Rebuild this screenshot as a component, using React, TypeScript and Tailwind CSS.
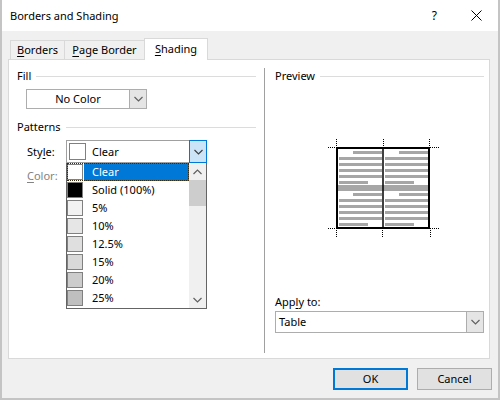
import React from "react";

const Chevron = ({ up = false, color = "#606060" }: { up?: boolean; color?: string }) => (
  <svg width="9" height="6" viewBox="0 0 9 6">
    {up ? (
      <polyline points="0.5,5 4.5,1 8.5,5" fill="none" stroke={color} strokeWidth="1.2" />
    ) : (
      <polyline points="0.5,1 4.5,5 8.5,1" fill="none" stroke={color} strokeWidth="1.2" />
    )}
  </svg>
);

const GroupHeader = ({ label }: { label: string }) => (
  <div className="flex items-center h-[16px]">
    <span>{label}</span>
    <div className="flex-1 h-px bg-[#dcdcdc] ml-[5px]" />
  </div>
);

const rows = [
  { label: "Clear", color: "#ffffff" },
  { label: "Solid (100%)", color: "#000000" },
  { label: "5%", color: "#f2f2f2" },
  { label: "10%", color: "#e6e6e6" },
  { label: "12.5%", color: "#dfdfdf" },
  { label: "15%", color: "#d9d9d9" },
  { label: "20%", color: "#cccccc" },
  { label: "25%", color: "#bfbfbf" },
];

const Preview = () => {
  const tops1 = [13, 19, 25, 31, 37, 43];
  const tops2 = [55, 61, 67, 73, 79, 85];
  const cells = [
    { L: 12, R: 55, sr: 26, sl: 41 },
    { L: 58, R: 101, sr: 72, sl: 87 },
  ];
  const g = "#a6a6a6";
  const lines: React.ReactNode[] = [];
  [tops1, tops2].forEach((tops, bi) => {
    cells.forEach((c, ci) => {
      tops.forEach((t, i) => {
        let x1 = c.L;
        let x2 = c.R;
        if (i === 0) x1 = c.sr;
        if (i === 5) x2 = c.sl;
        lines.push(<rect key={`${bi}-${ci}-${i}`} x={x1} y={t} width={x2 - x1} height={3} fill={g} />);
      });
    });
  });
  const d = { stroke: "#000", strokeWidth: 1, strokeDasharray: "1 1" };
  return (
    <svg width="113" height="101" viewBox="0 0 113 101">
      {lines}
      <rect x={11} y={47} width={91} height={6} fill={g} />
      <rect x={10} y={10} width={92} height={80} fill="none" stroke="#000" strokeWidth={2} />
      <line x1={56} y1={10} x2={56} y2={90} stroke="#000" strokeWidth={1.5} />
      <line x1={1} y1={9.5} x2={9} y2={9.5} {...d} />
      <line x1={9.5} y1={1} x2={9.5} y2={9} {...d} />
      <line x1={52} y1={9.5} x2={61} y2={9.5} {...d} />
      <line x1={56.5} y1={1} x2={56.5} y2={9} {...d} />
      <line x1={103} y1={9.5} x2={112} y2={9.5} {...d} />
      <line x1={102.5} y1={1} x2={102.5} y2={9} {...d} />
      <line x1={1} y1={90.5} x2={9} y2={90.5} {...d} />
      <line x1={9.5} y1={92} x2={9.5} y2={100} {...d} />
      <line x1={51} y1={90.5} x2={60} y2={90.5} {...d} />
      <line x1={55.5} y1={92} x2={55.5} y2={100} {...d} />
      <line x1={103} y1={90.5} x2={112} y2={90.5} {...d} />
      <line x1={103.5} y1={92} x2={103.5} y2={100} {...d} />
    </svg>
  );
};

export default function App() {
  return (
    <div className="w-[500px] h-[400px] flex flex-col bg-[#f0f0f0] border-x-2 border-b-2 border-[#c4c4c4] text-[11px] leading-[16px] text-black font-['Noto_Sans',sans-serif]">
      {/* Title bar */}
      <div className="h-[31px] shrink-0 bg-white flex items-center pl-[8px] pr-[16px]">
        <span className="text-[11px]">Borders and Shading</span>
        <div className="flex-1" />
        <span className="text-[12px]">?</span>
        <svg className="ml-[34px]" width="11" height="11" viewBox="0 0 11 11">
          <line x1="0.5" y1="0.5" x2="10.5" y2="10.5" stroke="#000" strokeWidth="1" />
          <line x1="10.5" y1="0.5" x2="0.5" y2="10.5" stroke="#000" strokeWidth="1" />
        </svg>
      </div>

      {/* Tabs */}
      <div className="pt-[7px] pl-[8px] flex items-end h-[28px] shrink-0">
        <div className="w-[55px] h-[19px] border border-b-0 border-[#d9d9d9] flex items-center justify-center">
          <span><u className="underline-offset-2">B</u>orders</span>
        </div>
        <div className="w-[81px] -ml-px h-[19px] border border-b-0 border-[#d9d9d9] flex items-center justify-center">
          <span><u className="underline-offset-2">P</u>age Border</span>
        </div>
        <div className="w-[64px] -ml-px h-[22px] -mb-px relative z-10 bg-white border border-b-0 border-[#d9d9d9] flex items-center justify-center pb-[2px]">
          <span><u className="underline-offset-2">S</u>hading</span>
        </div>
      </div>

      {/* Panel */}
      <div className="ml-[6px] w-[482px] h-[300px] shrink-0 bg-white border border-[#d9d9d9] flex">
        {/* Left column */}
        <div className="w-[255px] flex flex-col pl-[8px] pr-[8px]">
          <div className="mt-[8px]">
            <GroupHeader label="Fill" />
          </div>
          <div className="mt-[5px] ml-[9px] w-[121px] h-[20px] border border-[#adadad] flex">
            <div className="flex-1 flex items-center justify-center">No Color</div>
            <div className="w-[17px] bg-[#e5e5e5] border-l border-[#adadad] flex items-center justify-center">
              <Chevron />
            </div>
          </div>
          <div className="mt-[10px]">
            <GroupHeader label="Patterns" />
          </div>
          <div className="mt-[5px] flex items-center h-[23px] pl-[10px]">
            <span className="w-[39px]">Sty<u className="underline-offset-2">l</u>e:</span>
            <div className="relative w-[141px] h-[23px] border border-[#a0a0a0] flex">
              <div className="flex-1 flex items-center">
                <div className="ml-[2px] w-[17px] h-[17px] border border-[#808080] bg-white" />
                <span className="ml-[6px]">Clear</span>
              </div>
              <div className="w-[18px] -my-px -mr-px bg-[#cce4f7] border border-[#0078d7] flex items-center justify-center">
                <Chevron color="#404040" />
              </div>
              {/* Dropdown list */}
              <div className="absolute left-[-1px] top-[22px] w-[141px] h-[146px] z-20 bg-white border-x border-b border-[#646464] flex">
                <div className="flex-1 flex flex-col">
                  {rows.map((r, i) => (
                    <div key={r.label} className="relative h-[18px] flex items-stretch">
                      <div className="w-[17px] flex items-center">
                        <div className="w-[16px] h-[16px] border border-[#808080]" style={{ backgroundColor: r.color }} />
                      </div>
                      <div className={`flex-1 flex items-center pl-[8px] ${i === 0 ? "bg-[#0078d7] text-white" : ""}`}>
                        {r.label}
                      </div>
                      {i === 0 && (
                        <div className="absolute inset-0 border border-dotted border-[#3a2a10]" />
                      )}
                    </div>
                  ))}
                </div>
                <div className="w-[17px] bg-[#f0f0f0] flex flex-col">
                  <div className="h-[17px] flex items-center justify-center">
                    <Chevron up />
                  </div>
                  <div className="h-[26px] bg-[#cdcdcd]" />
                  <div className="flex-1" />
                  <div className="h-[17px] flex items-center justify-center">
                    <Chevron />
                  </div>
                </div>
              </div>
            </div>
          </div>
          <div className="mt-[5px] pl-[10px] h-[16px] text-[#838383]">
            <u className="underline-offset-2">C</u>olor:
          </div>
        </div>

        {/* Divider */}
        <div className="w-px bg-[#a0a0a0] mt-[8px] mb-[5px]" />

        {/* Right column */}
        <div className="flex-1 flex flex-col pl-[10px] pr-[5px]">
          <div className="mt-[8px]">
            <GroupHeader label="Preview" />
          </div>
          <div className="mt-[54px] ml-[52px]">
            <Preview />
          </div>
          <div className="mt-[55px] h-[16px]">
            App<u className="underline-offset-2">l</u>y to:
          </div>
          <div className="mt-[1px] w-[209px] h-[22px] border border-[#adadad] flex">
            <div className="flex-1 flex items-center pl-[3px]">Table</div>
            <div className="w-[17px] bg-[#e5e5e5] border-l border-[#adadad] flex items-center justify-center">
              <Chevron />
            </div>
          </div>
        </div>
      </div>

      {/* Buttons */}
      <div className="mt-[9px] flex justify-end pr-[6px]">
        <div className="w-[75px] h-[22px] border-2 border-[#0078d7] bg-[#e1e1e1] flex items-center justify-center">OK</div>
        <div className="ml-[9px] w-[75px] h-[22px] border border-[#adadad] bg-[#e1e1e1] flex items-center justify-center">Cancel</div>
      </div>
    </div>
  );
}
